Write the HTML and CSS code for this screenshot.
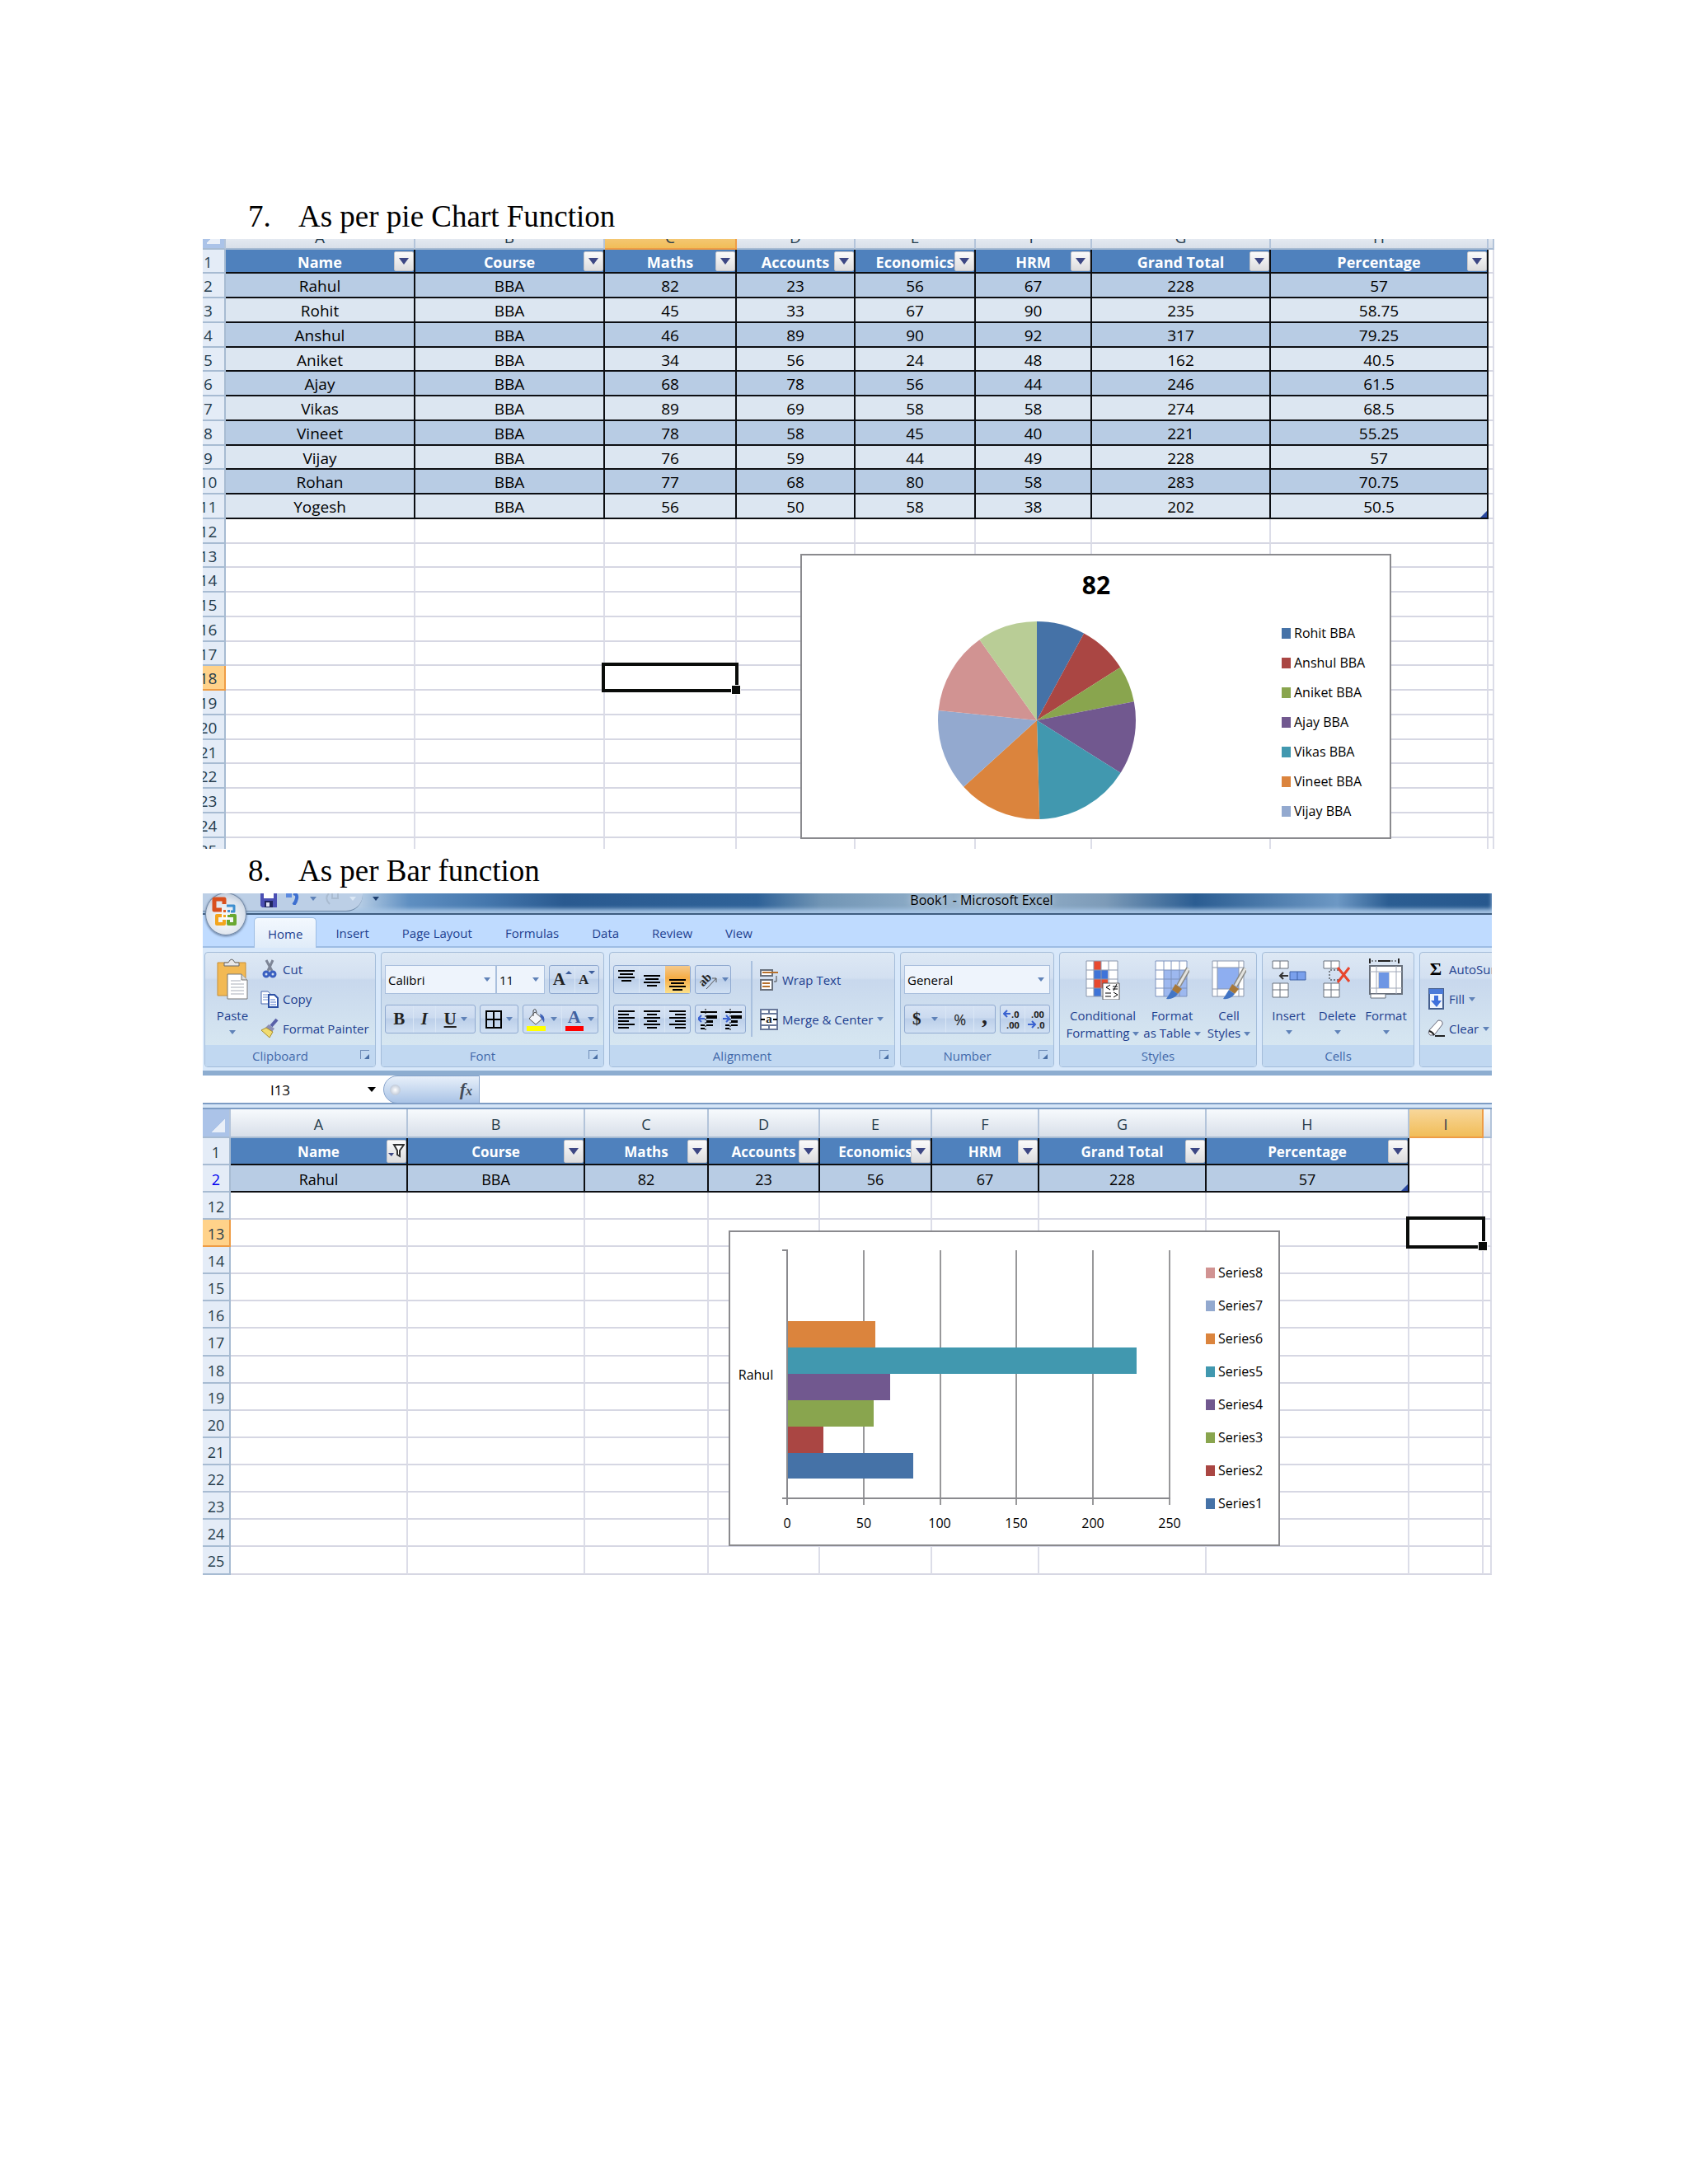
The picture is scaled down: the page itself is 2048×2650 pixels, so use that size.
FILE: index.html
```html
<!DOCTYPE html>
<html lang="en">

<head>
  <meta charset="UTF-8">
  <meta name="viewport" content="width=device-width, initial-scale=1.0">
  <title>Excel Charts</title>
  <link rel="stylesheet" href="styles.css">
</head>

<body>
  <main class="page">

    <h2 class="step"><span class="num">7.</span>As per pie Chart Function</h2>

    <section class="sheet sheet-pie">
      <table class="grid">
        <colgroup>
          <col class="c-row"><col class="c-a"><col class="c-b"><col class="c-c"><col class="c-d"><col class="c-e"><col class="c-f"><col class="c-g"><col class="c-h"><col>
        </colgroup>
        <thead>
          <tr><th class="corner"></th><th>A</th><th>B</th><th class="on">C</th><th>D</th><th>E</th><th>F</th><th>G</th><th>H</th><th></th></tr>
        </thead>
        <tbody id="pieRows">
          <tr class="titles"><th>1</th><td>Name<button class="filter" aria-label="Filter Name"></button></td><td>Course<button class="filter" aria-label="Filter Course"></button></td><td>Maths<button class="filter" aria-label="Filter Maths"></button></td><td>Accounts<button class="filter" aria-label="Filter Accounts"></button></td><td>Economics<button class="filter" aria-label="Filter Economics"></button></td><td>HRM<button class="filter" aria-label="Filter HRM"></button></td><td>Grand Total<button class="filter" aria-label="Filter Grand Total"></button></td><td>Percentage<button class="filter" aria-label="Filter Percentage"></button></td><td></td></tr>
          <tr class="data"><th>2</th><td>Rahul</td><td>BBA</td><td>82</td><td>23</td><td>56</td><td>67</td><td>228</td><td>57</td><td></td></tr>
          <tr class="data alt"><th>3</th><td>Rohit</td><td>BBA</td><td>45</td><td>33</td><td>67</td><td>90</td><td>235</td><td>58.75</td><td></td></tr>
          <tr class="data"><th>4</th><td>Anshul</td><td>BBA</td><td>46</td><td>89</td><td>90</td><td>92</td><td>317</td><td>79.25</td><td></td></tr>
          <tr class="data alt"><th>5</th><td>Aniket</td><td>BBA</td><td>34</td><td>56</td><td>24</td><td>48</td><td>162</td><td>40.5</td><td></td></tr>
          <tr class="data"><th>6</th><td>Ajay</td><td>BBA</td><td>68</td><td>78</td><td>56</td><td>44</td><td>246</td><td>61.5</td><td></td></tr>
          <tr class="data alt"><th>7</th><td>Vikas</td><td>BBA</td><td>89</td><td>69</td><td>58</td><td>58</td><td>274</td><td>68.5</td><td></td></tr>
          <tr class="data"><th>8</th><td>Vineet</td><td>BBA</td><td>78</td><td>58</td><td>45</td><td>40</td><td>221</td><td>55.25</td><td></td></tr>
          <tr class="data alt"><th>9</th><td>Vijay</td><td>BBA</td><td>76</td><td>59</td><td>44</td><td>49</td><td>228</td><td>57</td><td></td></tr>
          <tr class="data"><th>10</th><td>Rohan</td><td>BBA</td><td>77</td><td>68</td><td>80</td><td>58</td><td>283</td><td>70.75</td><td></td></tr>
          <tr class="data alt last"><th>11</th><td>Yogesh</td><td>BBA</td><td>56</td><td>50</td><td>58</td><td>38</td><td>202</td><td>50.5</td><td></td></tr>
        </tbody>
      </table>

      <div class="chart pie-chart">
        <h3>82</h3>
        <!-- each slice is a dash on a circle whose path length is the sum of the marks -->
        <svg class="pie" viewBox="0 0 240 240" role="img" aria-label="Pie chart of Maths marks">
          <g transform="rotate(-90 120 120)" fill="none" stroke-width="120">
            <circle cx="120" cy="120" r="60" pathLength="569" stroke="#4572a7" stroke-dasharray="45 569"/>
            <circle cx="120" cy="120" r="60" pathLength="569" stroke="#aa4643" stroke-dasharray="46 569" stroke-dashoffset="-45"/>
            <circle cx="120" cy="120" r="60" pathLength="569" stroke="#89a54e" stroke-dasharray="34 569" stroke-dashoffset="-91"/>
            <circle cx="120" cy="120" r="60" pathLength="569" stroke="#71588f" stroke-dasharray="68 569" stroke-dashoffset="-125"/>
            <circle cx="120" cy="120" r="60" pathLength="569" stroke="#4198af" stroke-dasharray="89 569" stroke-dashoffset="-193"/>
            <circle cx="120" cy="120" r="60" pathLength="569" stroke="#db843d" stroke-dasharray="78 569" stroke-dashoffset="-282"/>
            <circle cx="120" cy="120" r="60" pathLength="569" stroke="#93a9cf" stroke-dasharray="76 569" stroke-dashoffset="-360"/>
            <circle cx="120" cy="120" r="60" pathLength="569" stroke="#d19392" stroke-dasharray="77 569" stroke-dashoffset="-436"/>
            <circle cx="120" cy="120" r="60" pathLength="569" stroke="#b9cd96" stroke-dasharray="56 569" stroke-dashoffset="-513"/>
          </g>
        </svg>
        <ul class="legend">
          <li class="s1">Rohit BBA</li>
          <li class="s2">Anshul BBA</li>
          <li class="s3">Aniket BBA</li>
          <li class="s4">Ajay BBA</li>
          <li class="s5">Vikas BBA</li>
          <li class="s6">Vineet BBA</li>
          <li class="s7">Vijay BBA</li>
        </ul>
      </div>
    </section>

    <h2 class="step"><span class="num">8.</span>As per Bar function</h2>

    <section class="excel">
      <header class="titlebar">
        <div class="qat">
          <button aria-label="Save"><svg width="20" height="17" viewBox="0 0 20 17"><path d="M0 0h20v17H2l-2-2z" fill="#4a4fb4"/><path d="M4 0h12v6H4z" fill="#fff"/><path d="M5 9h10v8H5z" fill="#20265f"/><path d="M7 11h4v5H7z" fill="#dfe3f5"/></svg></button>
          <button aria-label="Undo"><svg width="20" height="14" viewBox="0 0 20 14"><path d="M1 0v5h7V0z" fill="#5b8ae0"/><path d="M10 0q5 1 4 6t-4 8" fill="none" stroke="#3d6fd0" stroke-width="4"/></svg></button>
          <i class="caret"></i>
          <button aria-label="Redo"><svg width="20" height="14" viewBox="0 0 20 14"><path d="M5 0q-6 6 1 13M9 0v6h7V0" fill="none" stroke="#a9bbd0" stroke-width="2"/></svg></button>
          <i class="caret pale"></i>
        </div>
        <i class="caret more"></i>
        <span class="doc">Book1 - Microsoft Excel</span>
      </header>

      <button class="office" aria-label="Office Button">
        <svg width="34" height="40" viewBox="0 0 34 40" fill="none" stroke-linejoin="round">
          <path d="M12 19H3V6h12v6" stroke="#d9501e" stroke-width="5"/>
          <path d="M18 14h9v7h-4" stroke="#3f8fd0" stroke-width="3"/>
          <path d="M12 26H6v10h9v-5" stroke="#f3a51e" stroke-width="4"/>
          <path d="M22 26h6v10h-8v-5" stroke="#6aa832" stroke-width="4"/>
          <path d="M14 19h3v3h-3z" fill="#e2602a"/>
          <path d="M19 19h3v3h-3z" fill="#3f8fd0"/>
          <path d="M14 25h3v3h-3z" fill="#f3a51e"/>
          <path d="M19 25h3v3h-3z" fill="#6aa832"/>
        </svg>
      </button>

      <nav class="tabs">
        <a href="#home" class="active">Home</a>
        <a href="#insert">Insert</a>
        <a href="#layout">Page Layout</a>
        <a href="#formulas">Formulas</a>
        <a href="#data">Data</a>
        <a href="#review">Review</a>
        <a href="#view">View</a>
      </nav>

      <div class="ribbon" id="home">
        <!-- Clipboard -->
        <div class="group g-clipboard">
          <div class="body">
            <button class="big">
              <svg viewBox="0 0 38 50"><path d="M1 5h34v40H1z" fill="#f2b954" stroke="#c98f35"/><path d="M9 9V5h5q4-8 8 0h5v4z" fill="#e8e8ea" stroke="#666"/><path d="M13 19h17l7 7v23H13z" fill="#fff" stroke="#777"/><path d="M30 19v7h7" fill="#ddd" stroke="#777"/><path d="M17 27h12M17 31h16M17 35h16M17 39h16M17 43h16" stroke="#a7adb8"/></svg>
              Paste<i class="caret"></i>
            </button>
            <div class="stack">
              <button><svg viewBox="0 0 22 24"><path d="M7 1l7 13M15 1L9 14" stroke="#7d8596" stroke-width="3"/><circle cx="7" cy="18" r="3" fill="none" stroke="#3a5fc0" stroke-width="3"/><circle cx="15" cy="18" r="3" fill="none" stroke="#3a5fc0" stroke-width="3"/></svg>Cut</button>
              <button><svg viewBox="0 0 22 24"><path d="M1 3h8l3 3v12H1z" fill="#fff" stroke="#4866ad"/><path d="M3 7h6M3 10h6M3 13h6" stroke="#6f8fd0"/><path d="M10 7h7l4 4v11H10z" fill="#fff" stroke="#2c50a5" stroke-width="2"/><path d="M12 13h6M12 16h7M12 19h7" stroke="#4f77cc"/></svg>Copy</button>
              <button><svg viewBox="0 0 22 24"><path d="M20 1l-7 8" stroke="#5961a8" stroke-width="4"/><path d="M10 7l7 5-3 4-8-5z" fill="#8c8fb5"/><path d="M7 11l8 5-4 7-10-9z" fill="#f1dc70" stroke="#a88d2d"/></svg>Format Painter</button>
            </div>
          </div>
          <div class="label">Clipboard<button class="launch" aria-label="Clipboard options"></button></div>
        </div>

        <!-- Font -->
        <div class="group g-font">
          <div class="body rows">
            <div class="row">
              <div class="combos">
                <span class="combo name"><select aria-label="Font"><option>Calibri</option></select></span>
                <span class="combo size"><select aria-label="Font size"><option>11</option></select></span>
              </div>
              <div class="set w61">
                <button class="serif" aria-label="Grow font">A<i class="caret up"></i></button>
                <button class="serif small" aria-label="Shrink font">A<i class="caret up down"></i></button>
              </div>
            </div>
            <div class="row">
              <div class="set w110">
                <button class="serif">B</button>
                <button class="serif italic">I</button>
                <button class="serif underline"><u>U</u><i class="caret"></i></button>
              </div>
              <div class="set w47">
                <button aria-label="Borders"><svg width="20" height="22" viewBox="0 0 20 22"><path d="M1 1h18v20H1zM10 1v20M1 11h18" fill="none" stroke="#000" stroke-width="2"/></svg><i class="caret"></i></button>
              </div>
              <div class="set w92">
                <button aria-label="Fill color"><svg width="24" height="28" viewBox="0 0 24 28"><path d="M10 5l9 8-8 7-8-7z" fill="#f4f6fa" stroke="#555"/><path d="M8 10V3q3-4 4 3" fill="none" stroke="#444"/><path d="M16 7q7 2 5 11-2-4-4-6z" fill="#3f62b8"/><path d="M0 22h23v6H0z" fill="#ff0"/></svg><i class="caret"></i></button>
                <button aria-label="Font color"><span class="fontcolor">A</span><i class="caret"></i></button>
              </div>
            </div>
          </div>
          <div class="label">Font<button class="launch" aria-label="Font options"></button></div>
        </div>

        <!-- Alignment -->
        <div class="group g-align">
          <div class="body">
            <div class="rows">
              <div class="row">
                <div class="set w94">
                  <button aria-label="Top align"><svg width="20" height="26" viewBox="0 0 20 26"><path d="M0 2h20M2 6h16M0 10h20M4 14h12" stroke="#000" stroke-width="2"/></svg></button>
                  <button aria-label="Middle align"><svg width="20" height="26" viewBox="0 0 20 26"><path d="M0 8h20M2 12h16M0 16h20M4 20h12" stroke="#000" stroke-width="2"/></svg></button>
                  <button class="pressed" aria-label="Bottom align"><svg width="20" height="26" viewBox="0 0 20 26"><path d="M0 13h20M2 17h16M0 21h20M4 25h12" stroke="#000" stroke-width="2"/></svg></button>
                </div>
                <div class="set w44">
                  <button aria-label="Orientation"><svg width="24" height="26" viewBox="0 0 24 26"><text x="1" y="18" transform="rotate(-45 8 14)" class="icon-text">ab</text><path d="M10 24L22 11M17 11h5v5" fill="none" stroke="#555" stroke-width="1"/></svg><i class="caret"></i></button>
                </div>
              </div>
              <div class="row">
                <div class="set w94">
                  <button aria-label="Align left"><svg width="20" height="22" viewBox="0 0 20 22"><path d="M0 1h20M0 5h13M0 9h20M0 13h13M0 17h20M0 21h13" stroke="#000" stroke-width="2"/></svg></button>
                  <button aria-label="Center"><svg width="20" height="22" viewBox="0 0 20 22"><path d="M0 1h20M4 5h12M0 9h20M4 13h12M0 17h20M4 21h12" stroke="#000" stroke-width="2"/></svg></button>
                  <button aria-label="Align right"><svg width="20" height="22" viewBox="0 0 20 22"><path d="M0 1h20M7 5h13M0 9h20M7 13h13M0 17h20M7 21h13" stroke="#000" stroke-width="2"/></svg></button>
                </div>
                <div class="set w62">
                  <button aria-label="Decrease indent"><svg width="24" height="26" viewBox="0 0 24 26"><path d="M3 4h20M3 20h5M10 20h8M3 24h5" stroke="#000" stroke-width="2"/><path d="M10 8h13v4H10zM10 14h8v3h-8z"/><path d="M9 0v26" stroke="#000" stroke-dasharray="2 2"/><path d="M8 12H1M4 8l-4 4 4 4" fill="none" stroke="#3a62d0" stroke-width="2"/></svg></button>
                  <button aria-label="Increase indent"><svg width="24" height="26" viewBox="0 0 24 26"><path d="M3 4h20M3 20h5M10 20h8M3 24h5" stroke="#000" stroke-width="2"/><path d="M10 8h13v4H10zM10 14h8v3h-8z"/><path d="M9 0v26" stroke="#000" stroke-dasharray="2 2"/><path d="M0 12h7M4 8l4 4-4 4" fill="none" stroke="#3a62d0" stroke-width="2"/></svg></button>
                </div>
              </div>
            </div>
            <div class="wraps">
              <button><svg width="22" height="28" viewBox="0 0 22 28"><path d="M1 2h14v7H1zM1 14h14v12H1z" fill="#fff" stroke="#68707c" stroke-width="2"/><path d="M3 5h19M3 18h9M3 22h9" stroke="#b5702c" stroke-width="2"/><path d="M20 9v7h-3" fill="none" stroke="#444"/></svg>Wrap Text</button>
              <button><svg width="22" height="26" viewBox="0 0 22 26"><path d="M1 1h20v24H1zM1 6h20M1 20h20M11 1v5M11 20v5" fill="#fff" stroke="#68789a" stroke-width="2"/><text x="11" y="17" text-anchor="middle" class="icon-text">a</text><path d="M1 13h5M16 13h5" stroke="#000" stroke-width="2"/></svg>Merge &amp; Center<i class="caret"></i></button>
            </div>
          </div>
          <div class="label">Alignment<button class="launch" aria-label="Alignment options"></button></div>
        </div>

        <!-- Number -->
        <div class="group g-number">
          <div class="body rows">
            <div class="row">
              <span class="combo format"><select aria-label="Number format"><option>General</option></select></span>
            </div>
            <div class="row">
              <div class="set w111">
                <button class="serif dollar">$<i class="caret"></i></button>
                <button class="percent">%</button>
                <button class="serif comma">,</button>
              </div>
              <div class="set w61">
                <button aria-label="Increase decimal"><svg width="24" height="26" viewBox="0 0 24 26"><text x="10" y="11" class="icon-num">.0</text><text x="4" y="24" class="icon-num">.00</text><path d="M9 6H2M5 2L1 6l4 4" fill="none" stroke="#3a62d0" stroke-width="2"/></svg></button>
                <button aria-label="Decrease decimal"><svg width="24" height="26" viewBox="0 0 24 26"><text x="4" y="11" class="icon-num">.00</text><text x="11" y="24" class="icon-num">.0</text><path d="M0 19h8M5 15l4 4-4 4" fill="none" stroke="#3a62d0" stroke-width="2"/></svg></button>
              </div>
            </div>
          </div>
          <div class="label">Number<button class="launch" aria-label="Number options"></button></div>
        </div>

        <!-- Styles -->
        <div class="group g-styles">
          <div class="body">
            <button class="big w90">
              <svg viewBox="0 0 42 50"><path d="M1 3h38v43H1z" fill="#fff"/><path d="M10 3h9v11h-9zM10 25h17v11H10z" fill="#e8492f"/><path d="M10 14h17v11H10zM10 36h9v10h-9z" fill="#3f74d8"/><path d="M1 3h38v43H1zM10 3v43M19 3v43M28 3v43M1 14h38M1 25h38M1 36h38" fill="none" stroke="#8b97ad"/><path d="M21 30h20v20H21z" fill="#fff" stroke="#555"/><path d="M30 32l-5 3 5 3M24 42h7M24 46h7M33 34h6M33 37h6M38 31l-4 8M34 41l5 3-5 3" fill="none" stroke="#000" stroke-width="1"/></svg>
              Conditional<span>Formatting <i class="caret"></i></span>
            </button>
            <button class="big w78">
              <svg viewBox="0 0 42 50"><path d="M1 3h38v43H1z" fill="#fff"/><path d="M11 14h28v32H11z" fill="#9db8ef"/><path d="M1 3h38v43H1zM11 3v43M20 3v43M30 3v43M1 14h38M1 25h38M1 36h38" fill="none" stroke="#7d92bd"/><path d="M41 12L29 33" stroke="#8a8a86" stroke-width="6"/><path d="M41 12L29 33" stroke="#e3e3df" stroke-width="3"/><path d="M25 31l8 6-5 6-7-5z" fill="#a87838"/><path d="M21 38l7 5q-5 7-14 6z" fill="#4275c4"/></svg>
              Format<span>as Table <i class="caret"></i></span>
            </button>
            <button class="big w60">
              <svg viewBox="0 0 42 50"><path d="M1 3h38v43H1z" fill="#fff" stroke="#8b97ad"/><path d="M7 11h26v26H7z" fill="#8eaef0"/><path d="M7 3v43M33 3v43M1 11h38M1 37h38" stroke="#8b97ad"/><path d="M41 12L29 33" stroke="#8a8a86" stroke-width="6"/><path d="M41 12L29 33" stroke="#e3e3df" stroke-width="3"/><path d="M25 31l8 6-5 6-7-5z" fill="#a87838"/><path d="M21 38l7 5q-5 7-14 6z" fill="#4275c4"/></svg>
              Cell<span>Styles <i class="caret"></i></span>
            </button>
          </div>
          <div class="label">Styles</div>
        </div>

        <!-- Cells -->
        <div class="group g-cells">
          <div class="body">
            <button class="big w59">
              <svg viewBox="0 0 42 50"><path d="M1 3h19v9H1zM1 30h19v17H1zM10 3v9M10 30v17M1 38h19" fill="#fff" stroke="#68707c" stroke-width="1"/><path d="M22 16h19v10H22zM31 16v10" fill="#7aa0ec" stroke="#3f62a8"/><path d="M20 21H10M14 17l-4 4 4 4" fill="none" stroke="#333" stroke-width="2"/></svg>
              Insert<i class="caret"></i>
            </button>
            <button class="big w59">
              <svg viewBox="0 0 42 50"><path d="M4 3h19v9H4zM4 30h19v17H4zM13 3v9M13 30v17M4 38h19" fill="#fff" stroke="#68707c"/><path d="M22 14H11v12h11" fill="none" stroke="#222" stroke-dasharray="2 2"/><path d="M21 11l14 17M35 11L21 29" stroke="#e8452c" stroke-width="3"/></svg>
              Delete<i class="caret"></i>
            </button>
            <button class="big w59">
              <svg viewBox="0 0 42 50"><path d="M1 9h39v34H1z" fill="#fff" stroke="#68707c" stroke-width="2"/><path d="M9 9v34M33 9v34M1 16h39M1 36h39M12 17v19M24 17v19" stroke="#a0a8b8"/><path d="M12 17h12v19H12z" fill="#6d96e4"/><path d="M2 43h18v5H2z" fill="#fff" stroke="#68707c"/><path d="M1 0v6M36 0v6M11 3h15" stroke="#222" stroke-width="2"/><path d="M3 3h32" stroke="#222" stroke-dasharray="2 2"/></svg>
              Format<i class="caret"></i>
            </button>
          </div>
          <div class="label">Cells</div>
        </div>

        <!-- Editing, runs off the window edge -->
        <div class="group g-editing">
          <div class="body">
            <div class="stack">
              <button><span class="sigma">Σ</span>AutoSum</button>
              <button><svg viewBox="0 0 22 26"><path d="M3 1h17v24H3z" fill="#eef3fc" stroke="#46608f" stroke-width="2"/><path d="M3 1h17v6H3z" fill="#4b7ad8"/><path d="M9 9h5v6h4l-6 8-7-8h4z" fill="#3f70dc"/></svg>Fill <i class="caret"></i></button>
              <button><svg viewBox="0 0 22 26"><path d="M3 15L14 3q6 0 5 5L9 21H4q-3-2-1-6z" fill="#fff" stroke="#667"/><path d="M9 21q-2-4-6-5M10 22h12" fill="none" stroke="#222" stroke-width="2"/></svg>Clear <i class="caret"></i></button>
            </div>
          </div>
          <div class="label"></div>
        </div>
      </div>

      <div class="formula-bar">
        <input class="cell-name" type="text" value="I13" aria-label="Name box">
        <button class="name-list" aria-label="Names"></button>
        <button class="fx" aria-label="Insert function"><span class="knob"></span><em>f<small>x</small></em></button>
        <input class="formula" type="text" aria-label="Formula">
      </div>

      <div class="sheet sheet-bar">
        <table class="grid">
          <colgroup>
            <col class="c-row"><col class="c-a"><col class="c-b"><col class="c-c"><col class="c-d"><col class="c-e"><col class="c-f"><col class="c-g"><col class="c-h"><col class="c-i"><col>
          </colgroup>
          <thead>
            <tr><th class="corner"></th><th>A</th><th>B</th><th>C</th><th>D</th><th>E</th><th>F</th><th>G</th><th>H</th><th class="on">I</th><th></th></tr>
          </thead>
          <tbody id="barRows">
            <tr class="titles"><th>1</th><td>Name<button class="filter active" aria-label="Filter Name"><svg width="20" height="18" viewBox="0 0 20 18"><path d="M7 1h12l-5 7v7l-3-2V8z" fill="#fff" stroke="#333" stroke-width="2"/><path d="M0 11h7l-3 4z" fill="#3d4784"/></svg></button></td><td>Course<button class="filter" aria-label="Filter Course"></button></td><td>Maths<button class="filter" aria-label="Filter Maths"></button></td><td>Accounts<button class="filter" aria-label="Filter Accounts"></button></td><td>Economics<button class="filter" aria-label="Filter Economics"></button></td><td>HRM<button class="filter" aria-label="Filter HRM"></button></td><td>Grand Total<button class="filter" aria-label="Filter Grand Total"></button></td><td>Percentage<button class="filter" aria-label="Filter Percentage"></button></td><td></td><td></td></tr>
            <tr class="data last"><th class="filtered">2</th><td>Rahul</td><td>BBA</td><td>82</td><td>23</td><td>56</td><td>67</td><td>228</td><td>57</td><td></td><td></td></tr>
          </tbody>
        </table>

        <div class="chart bar-chart">
          <svg class="bars" viewBox="0 0 570 379" role="img" aria-label="Bar chart of Rahul's marks">
            <path d="M162 22v309M255 22v309M347 22v309M440 22v309M533 22v309" stroke="#98989a" stroke-width="2"/>
            <g>
              <rect x="70" y="108" width="106" height="32" fill="#db843d"/>
              <rect x="70" y="140" width="423" height="32" fill="#4198af"/>
              <rect x="70" y="172" width="124" height="32" fill="#71588f"/>
              <rect x="70" y="204" width="104" height="32" fill="#89a54e"/>
              <rect x="70" y="236" width="43" height="32" fill="#aa4643"/>
              <rect x="70" y="268" width="152" height="31" fill="#4572a7"/>
            </g>
            <path d="M63 22h6v309M63 323h471" fill="none" stroke="#8a8a8e" stroke-width="2"/>
            <g class="axis">
              <text x="31" y="179">Rahul</text>
              <text x="69" y="359">0</text>
              <text x="162" y="359">50</text>
              <text x="254" y="359">100</text>
              <text x="347" y="359">150</text>
              <text x="440" y="359">200</text>
              <text x="533" y="359">250</text>
            </g>
          </svg>
          <ul class="legend">
            <li class="s8">Series8</li>
            <li class="s7">Series7</li>
            <li class="s6">Series6</li>
            <li class="s5">Series5</li>
            <li class="s4">Series4</li>
            <li class="s3">Series3</li>
            <li class="s2">Series2</li>
            <li class="s1">Series1</li>
          </ul>
        </div>
      </div>
    </section>
  </main>

  <script>
    // Add the empty rows below the data
    function addRows(bodyId, from, to, cols, selRow, selCol) {
      const body = document.getElementById(bodyId);
      for (let r = from; r <= to; r++) {
        const tr = body.insertRow();
        const th = document.createElement("th");
        th.textContent = r;
        tr.appendChild(th);
        for (let c = 1; c <= cols; c++) {
          const td = tr.insertCell();
          if (r === selRow && c === selCol) td.className = "selected";
        }
        if (r === selRow) th.className = "on";
      }
    }

    addRows("pieRows", 12, 25, 9, 18, 3);
    addRows("barRows", 12, 25, 10, 13, 9);
  </script>
</body>

</html>
```
FILE: styles.css
```css
* {
  box-sizing: border-box;
}

body {
  margin: 0;
  background: #fff;
  color: #000;
  font-family: "Open Sans", "Noto Sans", sans-serif;
}

button {
  padding: 0;
  border: none;
  background: none;
  font: inherit;
  color: inherit;
}

.page {
  padding: 236px 235px 100px 246px;
}

.step {
  display: flex;
  margin: 0;
  padding-left: 55px;
  font: 37px/54px "Liberation Serif", serif;
}

.step .num {
  width: 61px;
}

/* Worksheet grid */

.sheet {
  position: relative;
  overflow: hidden;
  background: #fff;
}

.grid {
  width: 100%;
  table-layout: fixed;
  border-collapse: separate;
  border-spacing: 0;
  line-height: 22px;
  text-align: center;
}

.grid td,
.grid th {
  position: relative;
  padding: 2px 0 0;
  font-weight: normal;
  white-space: nowrap;
  border-right: 2px solid #dcdde8;
  border-bottom: 2px solid #d6d7e3;
}

.grid th {
  color: #263c4c;
  background: #e4ecf7;
  border-color: #a7bbd2;
}

.grid thead th {
  background: linear-gradient(#f7fafd, #d8dfe9);
  border-right-color: #b3c4da;
}

.grid thead .on {
  background: linear-gradient(#f8d79b, #f1bd58);
  border-color: #ee9c45;
}

.grid tbody .on {
  background: #ffd28a;
  border-color: #ee9c45;
}

.grid .corner {
  background: linear-gradient(135deg, transparent 50%, #e9eff8 50%) right 5px bottom 5px / 16px 18px no-repeat #abc3e8;
}

.grid .filtered {
  color: #0000f0;
}

.grid .titles td:nth-child(-n+9) {
  color: #fff;
  font-weight: bold;
  background: #4f81bd;
  border-color: #0c0e12;
}

.grid .data td:nth-child(-n+9) {
  background: #b8cce4;
  border-color: #0c0e12;
}

.grid .alt td:nth-child(-n+9) {
  background: #dce6f1;
}

.grid .last td:nth-child(9)::after {
  content: "";
  position: absolute;
  right: 0;
  bottom: 0;
  border: 4px solid #2b49a0;
  border-top-color: transparent;
  border-left-color: transparent;
}

.grid .selected::before {
  content: "";
  position: absolute;
  z-index: 1;
  inset: -4px -4px -4px -4px;
  border: 4px solid #0a0c0a;
}

.grid .selected::after {
  content: "";
  position: absolute;
  z-index: 2;
  right: -7px;
  bottom: -7px;
  width: 10px;
  height: 10px;
  background: #0a0c0a;
  border: 1px solid #fff;
}

.filter {
  position: absolute;
  right: 0;
  top: 2px;
  bottom: 1px;
  width: 24px;
  background: linear-gradient(#fbfbfb, #dcdcde);
  border: 1px solid #c4c4c8;
  border-radius: 2px;
}

.filter::after {
  content: "";
  display: block;
  width: 0;
  margin: 0 auto;
  border: 6px solid transparent;
  border-top: 8px solid #3d4784;
  border-bottom: 0;
}

.filter.active::after {
  display: none;
}

.filter svg {
  display: block;
  margin: auto;
}

.sheet-pie {
  height: 740px;
  font-size: 19px;
}

/* first column and letters are scrolled partly out of view */
.sheet-pie .grid {
  width: calc(100% + 13px);
  margin: -18px 0 0 -13px;
}

.sheet-pie .titles {
  font-size: 18px;
}

.sheet-pie thead tr {
  height: 31px;
}

.sheet-pie tbody tr {
  height: 30px;
}

.sheet-pie tbody tr:nth-child(4n+1) {
  height: 29px;
}

.sheet-pie .c-row { width: 41px; }
.sheet-pie .c-a { width: 230px; }
.sheet-pie .c-b { width: 230px; }
.sheet-pie .c-c { width: 160px; }
.sheet-pie .c-d { width: 144px; }
.sheet-pie .c-e { width: 146px; }
.sheet-pie .c-f { width: 141px; }
.sheet-pie .c-g { width: 217px; }
.sheet-pie .c-h { width: 264px; }

.sheet-bar {
  height: 570px;
  font-size: 18px;
}

.sheet-bar .titles td {
  font-size: 17px;
}

.sheet-bar thead tr {
  height: 35px;
}

.sheet-bar tbody tr {
  height: 33px;
}

.sheet-bar tbody tr:nth-child(8n) {
  height: 34px;
}

.sheet-bar tbody::after {
  content: "";
  display: table-row;
  height: 6px;
}

.sheet-bar .c-row { width: 34px; }
.sheet-bar .c-a { width: 215px; }
.sheet-bar .c-b { width: 215px; }
.sheet-bar .c-c { width: 150px; }
.sheet-bar .c-d { width: 135px; }
.sheet-bar .c-e { width: 136px; }
.sheet-bar .c-f { width: 130px; }
.sheet-bar .c-g { width: 203px; }
.sheet-bar .c-h { width: 246px; }
.sheet-bar .c-i { width: 90px; }

/* Charts float over the cells */

.chart {
  position: absolute;
  z-index: 3;
  display: flex;
  background: #fff;
  border: 2px solid #8a8a8e;
  font-size: 16px;
}

.pie-chart {
  left: 725px;
  top: 382px;
  width: 717px;
  height: 346px;
  flex-wrap: wrap;
  align-content: flex-start;
  justify-content: space-between;
  padding: 0 22px 0 165px;
}

.pie-chart h3 {
  flex: 0 0 calc(100% + 142px);
  height: 80px;
  margin: 0 0 0 -142px;
  font-size: 30px;
  line-height: 72px;
  text-align: center;
}

.pie {
  width: 240px;
  height: 240px;
}

.legend {
  margin: 0;
  padding: 0;
  list-style: none;
}

.legend li {
  display: flex;
  align-items: center;
  height: 36px;
  white-space: nowrap;
}

.legend li::before {
  content: "";
  width: 11px;
  height: 13px;
  margin-right: 4px;
  background: var(--swatch);
}

.pie-chart .legend {
  width: 109px;
  margin-top: -4px;
}

.s1 { --swatch: #4572a7; }
.s2 { --swatch: #aa4643; }
.s3 { --swatch: #89a54e; }
.s4 { --swatch: #71588f; }
.s5 { --swatch: #4198af; }
.s6 { --swatch: #db843d; }
.s7 { --swatch: #93a9cf; }
.s8 { --swatch: #d19392; }

.bar-chart {
  left: 638px;
  top: 147px;
  width: 669px;
  height: 383px;
}

.bars {
  width: 570px;
  height: 379px;
}

.bar-chart .legend {
  padding: 29px 0 0 7px;
}

.bar-chart .legend li {
  height: 40px;
}

.axis {
  font-size: 16px;
  text-anchor: middle;
}

/* Excel window */

.excel {
  position: relative;
  margin-right: 3px;
  overflow: hidden;
  color: #1e3f8f;
  font-size: 15px;
}

.excel .sheet {
  color: #000;
}

.titlebar {
  display: flex;
  height: 26px;
  color: #000;
  background: linear-gradient(90deg, #a9c3de 0, #b9cfe6 12%, #5f8fc1 16%, #4577ad 22%, #2a5a90 28%, #2f6298 43%, #7195b5 48%, #9db8d0 60%, #7d9bb8 70%, #2b5d92 77%, #6d98c4 88%, #2b5d92 92%, #27588e);
  border-bottom: 2px solid #3f5d80;
  box-shadow: inset 0 -5px 5px #a6c4e4;
}

.qat {
  display: flex;
  gap: 10px;
  align-items: flex-start;
  width: 194px;
  height: 22px;
  padding-left: 70px;
  background: #bccfe6;
  border-bottom: 1px solid #6f89a8;
  border-radius: 0 0 20px 0;
}

.qat svg {
  display: block;
}

.qat .caret,
.titlebar .more {
  margin: 4px 0 0;
}

.titlebar .more {
  margin-left: 12px;
  border-top-color: #1e3f6f;
}

.doc {
  flex: 1;
  padding-left: 112px;
  font-size: 16px;
  line-height: 16px;
  text-align: center;
  text-shadow: 0 0 8px #d8e4f0;
}

.office {
  position: absolute;
  left: 3px;
  top: -1px;
  z-index: 2;
  width: 50px;
  height: 52px;
  background: radial-gradient(circle at 50% 60%, #fff, #dbe2ec 60%, #9fb0c6);
  border: 1px solid #7288a5;
  border-radius: 50%;
  box-shadow: 0 1px 3px #5d7393;
}

.office svg {
  display: block;
  margin: 0 auto 8px;
}

.caret {
  display: inline-block;
  border: 4px solid transparent;
  border-top: 5px solid #5f82b8;
  border-bottom: 0;
  vertical-align: middle;
}

.caret.pale {
  border-top-color: #dce8f5;
}

.tabs {
  display: flex;
  gap: 6px;
  height: 40px;
  padding: 3px 0 0 62px;
  background: #bfdbff;
  border-bottom: 2px solid #9dbde4;
}

.tabs a {
  height: 37px;
  padding: 0 17px;
  color: #1e3f8f;
  line-height: 38px;
  text-decoration: none;
}

.tabs .active {
  padding: 0 16px;
  background: linear-gradient(#f3f8fe, #e0ecf9);
  border: 1px solid #9dbde4;
  border-bottom: 0;
  border-radius: 5px 5px 0 0;
}

.ribbon {
  display: flex;
  gap: 6px;
  padding: 5px 2px 4px;
  background: #d8e8fa;
  border-bottom: 6px solid #8dadd0;
}

.group {
  display: flex;
  flex: none;
  flex-direction: column;
  height: 140px;
  background: linear-gradient(#dde8f4, #d3e0f1 22%, #c8d8ed 24%, #dbebf2);
  border: 1px solid #a3bcd9;
  border-radius: 4px;
  overflow: hidden;
}

.g-clipboard { width: 208px; }
.g-font { width: 271px; }
.g-align { width: 347px; }
.g-number { width: 187px; }
.g-styles { width: 240px; }
.g-cells { width: 185px; }
.g-editing { width: 210px; }

.body {
  display: flex;
  flex: 1;
}

.label {
  display: flex;
  justify-content: center;
  position: relative;
  height: 26px;
  padding-right: 24px;
  color: #4169aa;
  line-height: 26px;
  background: #c1d8f1;
}

.g-styles .label,
.g-cells .label {
  padding-right: 0;
}

.launch {
  position: absolute;
  right: 7px;
  top: 6px;
  width: 11px;
  height: 11px;
  border: 1px solid #6f8db8;
  border-right: 0;
  border-bottom: 0;
}

.launch::after {
  content: "";
  position: absolute;
  right: 0;
  bottom: 0;
  border: 3px solid #4a6fa5;
  border-top-color: transparent;
  border-left-color: transparent;
}

.big {
  display: flex;
  flex-direction: column;
  align-items: center;
  width: 52px;
  padding-top: 7px;
  line-height: 21px;
  white-space: nowrap;
}

.big svg {
  width: 42px;
  height: 50px;
  margin-bottom: 9px;
}

.big > .caret {
  margin-top: 7px;
}

.g-clipboard .body {
  padding-left: 7px;
}

.g-styles .body {
  padding-left: 7px;
}

.g-cells .body {
  padding-left: 2px;
}

.w90 { width: 90px; }
.w78 { width: 78px; }
.w60 { width: 60px; }
.w59 { width: 59px; }

.stack {
  display: flex;
  flex-direction: column;
  padding: 2px 0 0 8px;
}

.stack button {
  display: flex;
  gap: 5px;
  align-items: center;
  height: 36px;
  white-space: nowrap;
}

.stack svg {
  width: 22px;
  height: 26px;
}

.sigma {
  width: 22px;
  color: #000;
  font: bold 22px "Liberation Serif", serif;
}

.rows {
  display: flex;
  flex-direction: column;
  gap: 13px;
  padding: 15px 4px 0;
}

.row {
  display: flex;
  gap: 5px;
  height: 35px;
}

.combos {
  display: flex;
}

.combo {
  position: relative;
  display: flex;
  background: #eef4fc;
  border: 1px solid #a9bfdd;
}

.combo select {
  width: 100%;
  padding: 0 3px;
  border: none;
  color: #000;
  font: 15px "Open Sans", sans-serif;
  background: none;
  appearance: none;
}

.combo::after {
  content: "";
  position: absolute;
  right: 6px;
  top: 14px;
  border: 4px solid transparent;
  border-top: 5px solid #5f82b8;
  border-bottom: 0;
  pointer-events: none;
}

.combo.name { width: 135px; }
.combo.size { width: 59px; }
.combo.format { width: 177px; }

.set {
  display: flex;
  background: linear-gradient(#d6e3f4, #cbdaef 45%, #bccfe9 50%, #d0e0f3);
  border: 1px solid #8fa9d0;
  border-radius: 3px;
}

.set button {
  display: flex;
  flex: 1 1 auto;
  gap: 5px;
  align-items: center;
  justify-content: center;
  color: #222;
}

.set button + button {
  border-left: 1px solid #d9e6f5;
}

.w44 { width: 44px; }
.w47 { width: 47px; }
.w61 { width: 61px; }
.w62 { width: 62px; }
.w92 { width: 92px; }
.w94 { width: 94px; }
.w110 { width: 110px; }
.w111 { width: 111px; }

.set .pressed {
  background: linear-gradient(#f5c98b, #f5ac45 45%, #fce08a);
}

.set .serif {
  font: bold 21px "Liberation Serif", serif;
}

.set .italic {
  font-style: italic;
}

.set .small {
  font-size: 17px;
}

.set .dollar .caret {
  margin-left: 8px;
}

.set .comma {
  padding-bottom: 8px;
  font-size: 28px;
}

.set .percent {
  font-size: 18px;
}

.set .up {
  align-self: flex-start;
  margin: 6px 0 0 -5px;
  border-top: 0;
  border-bottom: 4px solid #3c5d9c;
}

.set .down {
  border-top: 4px solid #3c5d9c;
  border-bottom: 0;
}

.fontcolor {
  width: 22px;
  height: 28px;
  color: #41619f;
  font: bold 22px/22px "Liberation Serif", serif;
  text-align: center;
  border-bottom: 6px solid #f00;
}

.icon-text {
  font: bold 15px "Liberation Serif", serif;
  fill: #222;
}

.icon-num {
  font: bold 11px "Open Sans", sans-serif;
  fill: #222;
}

.wraps {
  display: flex;
  flex-direction: column;
  gap: 13px;
  height: 92px;
  margin: 10px 0 0 2px;
  padding: 5px 0 0 9px;
  border-left: 2px solid #a9c0de;
}

.wraps button {
  display: flex;
  gap: 5px;
  align-items: center;
  height: 35px;
  white-space: nowrap;
}

.formula-bar {
  display: flex;
  height: 41px;
  background: #fff;
  border-bottom: 2px solid #7d9cc4;
  box-shadow: inset 0 -4px #d5e5f7, inset 0 -6px #7d9cc4;
}

.formula-bar input {
  height: 34px;
  border: none;
  color: #000;
  font: 17px "Open Sans", sans-serif;
  background: none;
}

.cell-name {
  width: 188px;
  text-align: center;
}

.name-list {
  width: 31px;
  height: 34px;
}

.name-list::after {
  content: "";
  display: block;
  width: 0;
  margin-left: 12px;
  border: 5px solid transparent;
  border-top: 6px solid #000;
  border-bottom: 0;
}

.fx {
  display: flex;
  align-items: center;
  justify-content: space-between;
  width: 117px;
  height: 34px;
  padding: 0 8px 0 7px;
  background: linear-gradient(#e8f0fa, #c9daf0 50%, #a9c3e6);
  border: 1px solid #88a4cc;
  border-radius: 17px 0 0 17px;
}

.knob {
  width: 13px;
  height: 13px;
  background: radial-gradient(#fff, #a5b3c8);
  border-radius: 50%;
}

.fx em {
  color: #444b58;
  font: italic bold 22px "Liberation Serif", serif;
}

.fx small {
  font-size: 16px;
}

.formula {
  flex: 1;
}
```
